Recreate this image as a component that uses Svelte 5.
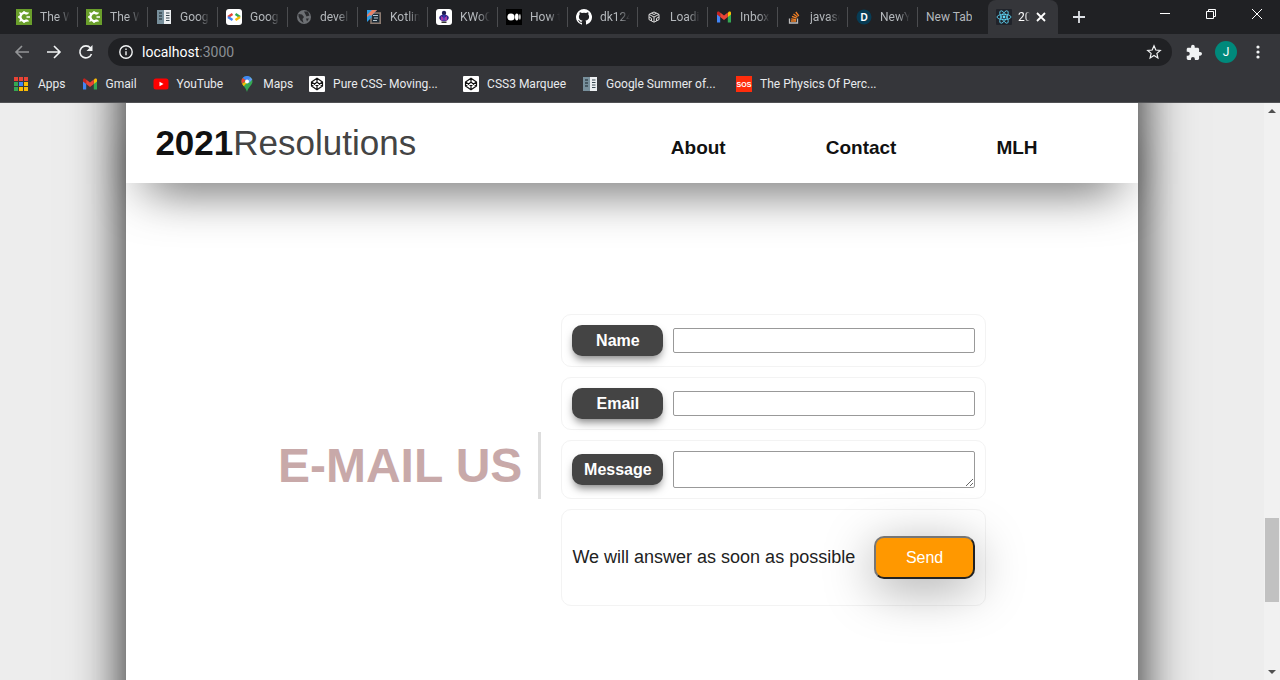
<script>
  const tabs = [
    { icon: 'camtasia', title: 'The W' },
    { icon: 'camtasia', title: 'The W' },
    { icon: 'docs', title: 'Goog' },
    { icon: 'code', title: 'Goog' },
    { icon: 'globe', title: 'devel' },
    { icon: 'kotlin', title: 'Kotlin' },
    { icon: 'kwoc', title: 'KWoC' },
    { icon: 'medium', title: 'How t' },
    { icon: 'github', title: 'dk124' },
    { icon: 'sandbox', title: 'Loadi' },
    { icon: 'gmail', title: 'Inbox' },
    { icon: 'stack', title: 'javasc' },
    { icon: 'dev', title: 'NewY' },
    { icon: '', title: 'New Tab' }
  ];

  const bookmarks = [
    { icon: 'apps', title: 'Apps' },
    { icon: 'gmail', title: 'Gmail' },
    { icon: 'youtube', title: 'YouTube' },
    { icon: 'maps', title: 'Maps' },
    { icon: 'codepen', title: 'Pure CSS- Moving...', wide: true },
    { icon: 'codepen', title: 'CSS3 Marquee' },
    { icon: 'docs', title: 'Google Summer of...', wide: true },
    { icon: 'sos', title: 'The Physics Of Perc...', wide: true }
  ];

  const links = ['About', 'Contact', 'MLH'];

  const appColors = ['#ea4335', '#ea4335', '#ea4335', '#34a853', '#4285f4', '#fbbc04', '#34a853', '#fbbc04', '#fbbc04'];

  let name = $state('');
  let email = $state('');
  let message = $state('');

  function send(e) {
    e.preventDefault();
    name = '';
    email = '';
    message = '';
  }
</script>

{#snippet icon(kind)}
  <svg class="icon" viewBox="0 0 16 16" aria-hidden="true">
    {#if kind === 'camtasia'}
      <rect width="16" height="16" fill="#6a9f2b"/>
      <path d="M11 5A4 4 0 1 0 11 11" fill="none" stroke="#fff" stroke-width="2.4"/>
      <path d="M8 2v2M8 12v2M2 8h2M3.500 3.500l1.500 1.500M3.500 12.500 5 11M12.500 3.500 11 5M12.500 12.500 11 11M10.500 8h3.500" stroke="#fff" stroke-width="1.4"/>
    {:else if kind === 'docs'}
      <rect x="1" y="1" width="7" height="14" fill="#78909c"/>
      <rect x="8" y="1" width="7" height="14" fill="#eceff1"/>
      <path d="M3 4h3M3 7h3M3 10h3" stroke="#37474f" stroke-width="1.6"/>
      <path d="M10 4h3.5M10 6.5h3.5M10 9h3.5M10 11.5h3.5" stroke="#37474f" stroke-width="1.2"/>
    {:else if kind === 'code'}
      <rect width="16" height="16" rx="3" fill="#fff"/>
      <path d="M6.500 5 2 8" stroke="#ea4335" stroke-width="2.4"/>
      <path d="M2 8l4.500 3" stroke="#4285f4" stroke-width="2.4"/>
      <path d="M9.500 5 14 8" stroke="#34a853" stroke-width="2.4"/>
      <path d="M14 8l-4.500 3" stroke="#fbbc04" stroke-width="2.4"/>
    {:else if kind === 'globe'}
      <circle cx="8" cy="8" r="7" fill="#6d7074"/>
      <path d="M2.500 5 6 5.500 8 8 6.500 10l1 4-3-2.500-2-4zM8 2.500h4l1.500 4-3 1-1-2z" fill="#2a2b2e"/>
      <path d="M10 9.500h3l-2 3z" fill="#2a2b2e"/>
    {:else if kind === 'kotlin'}
      <path d="M5 4h9.200v10.200H5z" fill="#1c2b36" stroke="#8b7a70" stroke-width="1.6"/>
      <path d="M1 1h10L1 12z" fill="#2d9ce5"/>
      <path d="M1 6 6 1h5L2.500 9.500 1 9z" fill="#e98063"/>
      <path d="M1 8v5l5-5-2-2z" fill="#2d9ce5"/>
      <path d="M7 6.500h5M8 9h4M7 11.500h4" stroke="#b9c8d2"/>
    {:else if kind === 'kwoc'}
      <rect width="16" height="16" rx="3" fill="#fff"/>
      <circle cx="8" cy="4" r="2.2" fill="#1e1e50"/>
      <ellipse cx="8" cy="8.800" rx="4.800" ry="3.400" fill="#32248c"/>
      <path d="M5 7 8 9l3-2v4.500H5z" fill="#a43aa6"/>
      <path d="M8 6v6" stroke="#2f49c8"/>
      <path d="M5.500 13.200h5" stroke="#222" stroke-width="1.4"/>
    {:else if kind === 'medium'}
      <rect width="16" height="16" fill="#000"/>
      <circle cx="5" cy="8" r="3.600" fill="#fff"/>
      <ellipse cx="10.800" cy="8" rx="1.800" ry="3.400" fill="#fff"/>
      <ellipse cx="13.900" cy="8" rx=".7" ry="3" fill="#fff"/>
    {:else if kind === 'github'}
      <path fill="#fff" d="M8 0a8 8 0 0 0-2.5 15.6c.4.1.5-.2.5-.4v-1.5c-2.2.5-2.7-.9-2.7-.9-.4-.9-.9-1.2-.9-1.2-.7-.5.1-.5.1-.5.8.1 1.2.8 1.2.8.7 1.2 1.9.9 2.3.7.1-.5.3-.9.5-1.1-1.8-.2-3.6-.9-3.6-4 0-.9.3-1.6.8-2.1-.1-.2-.4-1 .1-2.1 0 0 .7-.2 2.2.8a7.500 7.500 0 0 1 4 0c1.500-1 2.200-.8 2.200-.8.4 1.100.2 1.900.1 2.100.5.6.8 1.300.8 2.100 0 3.100-1.900 3.800-3.700 4 .3.2.6.7.6 1.500v2.200c0 .2.1.5.5.4A8 8 0 0 0 8 0z"/>
    {:else if kind === 'sandbox'}
      <path d="M8 3 13 5.400v5.200L8 13.200 3 10.600V5.400zM3 5.400 8 8l5-2.600M8 8v5M5.500 4.200 8 5.500l2.500-1.300M3 8l2.500 1.300V12M13 8l-2.500 1.300V12" fill="none" stroke="#ddd" stroke-width="1"/>
    {:else if kind === 'gmail'}
      <path d="M1 4.500v9h3.200V7z" fill="#4285f4"/>
      <path d="M15 4.500v9h-3.200V7z" fill="#34a853"/>
      <path d="M11.800 4v4L15 5.500V4c0-1.500-1.600-1.800-2.500-1z" fill="#fbbc04"/>
      <path d="M1 4v1.500L4.200 8V4l-.7-1C2.600 2.200 1 2.500 1 4z" fill="#c5221f"/>
      <path d="M4.200 3.600 8 6.500l3.800-2.900V8L8 11 4.200 8z" fill="#ea4335"/>
    {:else if kind === 'stack'}
      <path d="M3.500 9.500v4.500h8V9.500" fill="none" stroke="#bcbbbb" stroke-width="1.300"/>
      <path d="M5 12h5M5.200 9.800l4.800.8M6 7.300l4.600 1.900M7.500 4.900l4 3M9.800 3l3 4" stroke="#f48024" stroke-width="1.300"/>
    {:else if kind === 'dev'}
      <circle cx="8" cy="8" r="7.500" fill="#073c55"/>
      <text x="8" y="11.500" text-anchor="middle" class="badge-d">D</text>
    {:else if kind === 'react'}
      <rect width="16" height="16" rx="1" fill="#20232a"/>
      <g fill="none" stroke="#61dafb" stroke-width=".8">
        <ellipse cx="8" cy="8" rx="7" ry="2.700"/>
        <ellipse cx="8" cy="8" rx="7" ry="2.700" transform="rotate(60 8 8)"/>
        <ellipse cx="8" cy="8" rx="7" ry="2.700" transform="rotate(120 8 8)"/>
      </g>
      <circle cx="8" cy="8" r="1.400" fill="#61dafb"/>
    {:else if kind === 'apps'}
      {#each appColors as color, i}
        <rect x={(i % 3) * 5} y={1 + Math.floor(i / 3) * 5} width="4" height="4" fill={color}/>
      {/each}
    {:else if kind === 'youtube'}
      <rect x=".5" y="2.500" width="15" height="11" rx="2.500" fill="#f00"/>
      <path d="M6.500 5.700v4.600L10.500 8z" fill="#fff"/>
    {:else if kind === 'maps'}
      <path d="M8 0a5.500 5.500 0 0 0-5.500 5.500C2.500 9 6.500 10.500 8 16c1.500-5.500 5.500-7 5.500-10.500A5.500 5.500 0 0 0 8 0z" fill="#34a853"/>
      <path d="M8 0a5.500 5.500 0 0 0-4.300 2L8 5.500 11.500 1.200A5.500 5.500 0 0 0 8 0z" fill="#4285f4"/>
      <path d="M3.700 2a5.500 5.500 0 0 0-.7 5.800L7 4.500z" fill="#ea4335"/>
      <path d="M3 7.800 4.800 10.200 10 4z" fill="#fbbc04"/>
      <path d="M11.500 1.200 8 5.500l2 1.500 3.300-3.500z" fill="#669df6"/>
      <circle cx="8" cy="5.500" r="2" fill="#fff"/>
    {:else if kind === 'codepen'}
      <rect width="16" height="16" rx="1" fill="#fff"/>
      <path d="M8 2.200 13.500 5.900v4.200L8 13.800 2.500 10.100V5.900zM2.500 5.900 8 9.700l5.500-3.800M2.500 10.100 8 6.300l5.500 3.800M8 2.200v4.100M8 9.700v4.100" fill="none" stroke="#111" stroke-width="1.200" stroke-linejoin="round"/>
    {:else if kind === 'sos'}
      <rect width="16" height="16" fill="#ff2d0c"/>
      <text x="8" y="11" text-anchor="middle" class="badge-sos">SOS</text>
    {/if}
  </svg>
{/snippet}

<div class="window">
  <div class="tabs">
    {#each tabs as tab}
      <button class="tab">
        {#if tab.icon}{@render icon(tab.icon)}{/if}
        <span class="title" class:fade={tab.icon}>{tab.title}</span>
      </button>
    {/each}
    <button class="tab active">
      {@render icon('react')}
      <span class="title fade">20</span>
      <svg class="close" viewBox="0 0 10 10" aria-hidden="true"><path d="M1 1l8 8M9 1 1 9" stroke="#fff" stroke-width="1.800"/></svg>
    </button>
    <button class="new-tab" aria-label="New tab">
      <svg viewBox="0 0 12 12" width="12" height="12"><path d="M6 0v12M0 6h12" stroke="#dee1e6" stroke-width="1.800"/></svg>
    </button>
    <div class="controls">
      <button aria-label="Minimize"><svg viewBox="0 0 10 10"><path d="M0 4.500h10" /></svg></button>
      <button aria-label="Restore"><svg viewBox="0 0 10 10"><path d="M.5 2.500h7v7h-7zM2.500 2.500v-2h7v7h-2"/></svg></button>
      <button aria-label="Close"><svg viewBox="0 0 10 10"><path d="M0 0l10 10M10 0 0 10"/></svg></button>
    </div>
  </div>

  <div class="toolbar">
    <button aria-label="Back" class="dim"><svg class="icon" viewBox="0 0 16 16"><path d="M15 8H2M8 2 2 8l6 6"/></svg></button>
    <button aria-label="Forward"><svg class="icon" viewBox="0 0 16 16"><path d="M1 8h13M8 2l6 6-6 6"/></svg></button>
    <button aria-label="Reload"><svg class="icon" viewBox="0 0 16 16"><path d="M13.500 10A6 6 0 1 1 12.500 4"/><path d="M14.500 1v6h-6z" fill="#f1f3f4" stroke="none"/></svg></button>
    <div class="address">
      <svg class="icon" viewBox="0 0 16 16" aria-hidden="true"><circle cx="8" cy="8" r="6.200"/><path d="M8 7.300v4M8 4.500v1.600"/></svg>
      <span class="url">localhost<span class="port">:3000</span></span>
      <button aria-label="Bookmark this page"><svg class="icon" viewBox="0 0 16 16"><path class="thin" d="M8 1.800l1.800 4.200 4.500.4-3.400 3 1 4.500L8 11.500l-3.900 2.400 1-4.500-3.400-3 4.500-.4z"/></svg></button>
    </div>
    <button aria-label="Extensions"><svg class="icon" viewBox="1 0 22 22"><path fill="#f1f3f4" stroke="none" d="M20.500 11H19V7c0-1.100-.9-2-2-2h-4V3.500a2.500 2.500 0 0 0-5 0V5H4c-1.100 0-2 .9-2 2v3.800h1.500a2.700 2.700 0 0 1 0 5.400H2V20c0 1.100.9 2 2 2h3.800v-1.500a2.700 2.700 0 0 1 5.400 0V22H17c1.100 0 2-.9 2-2v-4h1.500a2.500 2.500 0 0 0 0-5z"/></svg></button>
    <button class="avatar" aria-label="Profile">J</button>
    <button aria-label="Menu"><svg class="icon" viewBox="0 0 16 16"><g fill="#f1f3f4" stroke="none"><circle cx="8" cy="3" r="1.600"/><circle cx="8" cy="8" r="1.600"/><circle cx="8" cy="13" r="1.600"/></g></svg></button>
  </div>

  <nav class="bookmarks">
    {#each bookmarks as b}
      <a href="#bookmark" class:wide={b.wide}>{@render icon(b.icon)}<span>{b.title}</span></a>
    {/each}
  </nav>

  <div class="viewport">
    <div class="backdrop">
      <div class="page">
        <header>
          <h1><b>2021</b>Resolutions</h1>
          <nav>
            {#each links as link}
              <a href="#{link.toLowerCase()}">{link}</a>
            {/each}
          </nav>
        </header>

        <section class="contact">
          <h2>E-MAIL US</h2>
          <form onsubmit={send}>
            <div class="row">
              <label for="name">Name</label>
              <input id="name" type="text" bind:value={name}/>
            </div>
            <div class="row">
              <label for="email">Email</label>
              <input id="email" type="email" bind:value={email}/>
            </div>
            <div class="row">
              <label for="message">Message</label>
              <textarea id="message" rows="2" bind:value={message}></textarea>
            </div>
            <div class="row submit">
              <p>We will answer as soon as possible</p>
              <button type="submit">Send</button>
            </div>
          </form>
        </section>
      </div>
    </div>

    <div class="scrollbar">
      <svg viewBox="0 0 16 16" width="16" height="16" aria-hidden="true"><path d="M4 10h8L8 6z" fill="#505050"/></svg>
      <div class="track"><div class="thumb"></div></div>
      <svg viewBox="0 0 16 16" width="16" height="16" aria-hidden="true"><path d="M4 6h8l-4 4z" fill="#505050"/></svg>
    </div>
  </div>
</div>

<style>
  * { box-sizing: border-box; margin: 0; padding: 0; }

  :global(body) { margin: 0; }

  .window {
    height: 100vh;
    display: flex;
    flex-direction: column;
    overflow: hidden;
    background: #35363a;
    font-family: 'Segoe UI', Roboto, sans-serif;
    font-size: 12px;
  }

  button {
    font-family: inherit;
    font-size: inherit;
    border: none;
    background: none;
    cursor: pointer;
  }

  a { text-decoration: none; }

  svg { flex: none; display: block; }

  .icon {
    width: 16px;
    height: 16px;
  }

  .badge-d {
    font: bold 10px 'Liberation Sans', sans-serif;
    fill: #fff;
  }

  .badge-sos {
    font: bold 7px 'Liberation Sans', sans-serif;
    fill: #fff;
  }

  /* Tab strip */
  .tabs {
    display: flex;
    height: 34px;
    padding-left: 8px;
    background: #202124;
  }

  .tab {
    flex: 0 1 70px;
    min-width: 0;
    display: flex;
    align-items: center;
    gap: 8px;
    padding: 0 8px;
    background: linear-gradient(#4b4c4f, #4b4c4f) right center / 1px 20px no-repeat;
  }

  .tab:nth-last-child(4) { background: none; }

  .title {
    overflow: hidden;
    white-space: nowrap;
    color: #b4b8bc;
  }

  .fade {
    flex: 1;
    text-align: left;
    mask-image: linear-gradient(90deg, #000 60%, transparent);
  }

  .active {
    gap: 6px;
    background: #35363a;
    border-radius: 8px 8px 0 0;
  }

  .active .title { color: #fff; }

  .close {
    width: 10px;
    height: 10px;
    margin-right: 4px;
  }

  .new-tab { padding: 0 15px; }

  .controls {
    display: flex;
    margin-left: auto;
    height: 28px;
  }

  .controls button {
    width: 46px;
    display: grid;
    place-items: center;
  }

  .controls svg {
    width: 10px;
    height: 10px;
    fill: none;
    stroke: #fff;
  }

  /* Toolbar */
  .toolbar {
    display: flex;
    align-items: center;
    gap: 16px;
    height: 36px;
    padding: 0 14px;
  }

  .toolbar svg {
    fill: none;
    stroke: #f1f3f4;
    stroke-width: 1.6;
  }

  .toolbar .dim { opacity: .5; }

  .toolbar .thin { stroke-width: 1.2; }

  .address {
    flex: 1;
    display: flex;
    align-items: center;
    gap: 8px;
    height: 28px;
    padding: 0 10px;
    margin: 0 -2px;
    border-radius: 14px;
    background: #202124;
  }

  .address svg { stroke-width: 1.4; }

  .url {
    flex: 1;
    font-size: 14px;
    color: #fff;
  }

  .port { color: #8b8f94; }

  .avatar {
    width: 22px;
    height: 22px;
    margin: 0 -3px;
    border-radius: 50%;
    background: #00897b;
    color: #fff;
  }

  /* Bookmarks */
  .bookmarks {
    display: flex;
    align-items: center;
    gap: 16px;
    height: 33px;
    padding: 0 14px 4px;
    border-bottom: 1px solid #505154;
  }

  .bookmarks a {
    display: flex;
    align-items: center;
    gap: 8px;
    color: #e8eaed;
    white-space: nowrap;
  }

  .bookmarks .wide { width: 138px; }

  /* Site */
  .viewport {
    flex: 1;
    min-height: 0;
    display: flex;
    font-family: 'Liberation Sans', Arial, sans-serif;
    font-size: 16px;
  }

  .backdrop {
    flex: 1;
    display: flex;
    justify-content: center;
    overflow: hidden;
    background: #ededed;
  }

  /* runs past both ends of the viewport so the side shadow stays even */
  .page {
    width: 80%;
    margin: -60px 0;
    padding-top: 60px;
    background: #fff;
    box-shadow: 0 0 50px rgba(0, 0, 0, .9);
  }

  header {
    display: flex;
    align-items: center;
    justify-content: space-between;
    height: 80px;
    padding: 0 100px 0 29px;
    background: #fff;
    box-shadow: 0 25px 50px -20px rgba(0, 0, 0, .7);
  }

  h1 {
    font-size: 35px;
    font-weight: 400;
    color: #444;
  }

  h1 b { color: #111; }

  header nav {
    display: flex;
    gap: 100px;
    padding-top: 10px;
  }

  header a {
    font-size: 19px;
    font-weight: 700;
    color: #111;
  }

  .contact {
    display: flex;
    align-items: center;
    justify-content: center;
    gap: 20px;
    padding-top: 131px;
  }

  h2 {
    padding: 6px 16px 6px 0;
    border-right: 3px solid #ddd;
    font-size: 48px;
    color: #c8a9a9;
  }

  form {
    display: flex;
    flex-direction: column;
    gap: 10px;
    width: 42%;
    padding-bottom: 10px;
  }

  .row {
    display: flex;
    align-items: center;
    gap: 10px;
    padding: 10px;
    border: 1px solid #f3f3f3;
    border-radius: 10px;
  }

  label {
    width: 91px;
    padding: 6px 0;
    border-radius: 10px;
    background: #444;
    color: #fff;
    font-weight: 700;
    line-height: 19px;
    text-align: center;
    box-shadow: 0 5px 8px -2px rgba(0, 0, 0, .5);
  }

  input,
  textarea {
    flex: 1;
    min-width: 0;
    height: 25px;
    padding: 2px;
    border: 1px solid #999;
    border-radius: 2px;
    background: #fff;
    font: inherit;
  }

  textarea {
    height: 37px;
    resize: both;
  }

  .submit {
    justify-content: space-between;
    padding: 26px 10px;
  }

  .submit p {
    font-size: 18px;
    white-space: nowrap;
    color: #222;
  }

  .submit button {
    width: 101px;
    height: 43px;
    border: 2px solid;
    border-color: #767676 #222 #222 #767676;
    border-radius: 10px;
    background: #ff9800;
    color: #fff;
    font-size: 16px;
    box-shadow: 0 10px 50px rgba(0, 0, 0, .35);
  }

  .scrollbar {
    display: flex;
    flex-direction: column;
    width: 16px;
    background: #f1f1f1;
  }

  .track {
    flex: 1;
    display: flex;
    flex-direction: column;
    justify-content: flex-end;
    padding: 0 1px 62px;
  }

  .thumb {
    height: 84px;
    background: #c1c1c1;
  }
</style>
